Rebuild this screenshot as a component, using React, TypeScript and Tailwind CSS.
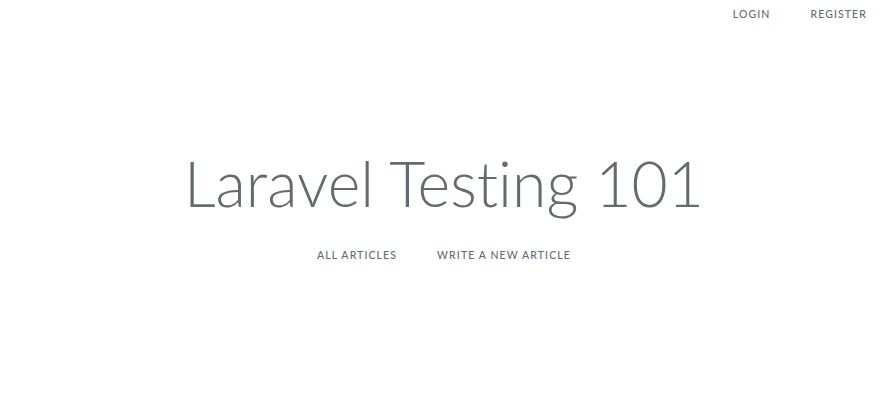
import React from "react";

const linkClass =
  "text-[10.5px] font-medium uppercase tracking-[1.1px] text-[#636b6f] no-underline";

export default function App() {
  return (
    <div className="relative flex h-[404px] w-full items-center justify-center bg-white pl-[8px] font-['Lato',sans-serif] text-[#636b6f] [font-variant-ligatures:none]">
      {/* Top-right auth links */}
      <div className="absolute right-[13px] top-[7px] flex gap-[40px]">
        <a href="#" className={linkClass}>Login</a>
        <a href="#" className={linkClass}>Register</a>
      </div>

      <div className="flex flex-col items-center pt-[12px]">
        <h1 className="mb-[34px] text-[62.5px] font-light leading-none">
          Laravel Testing 101
        </h1>
        <div className="flex gap-[40px]">
          <a href="#" className={linkClass}>All Articles</a>
          <a href="#" className={linkClass}>Write a new article</a>
        </div>
      </div>
    </div>
  );
}
